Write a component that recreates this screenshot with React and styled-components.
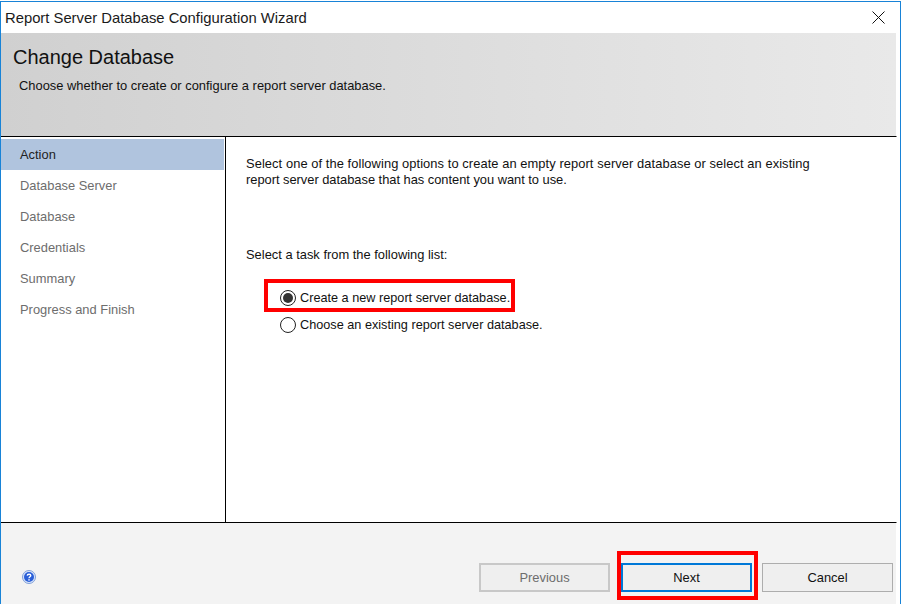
import styled, { createGlobalStyle } from 'styled-components';

const GlobalStyle = createGlobalStyle`
  html, body {
    margin: 0;
    padding: 0;
    background: #fff;
  }
  body {
    font-family: "Liberation Sans", Arial, sans-serif;
    color: #111;
  }
`;

const Window = styled.div`
  box-sizing: border-box;
  width: 901px;
  height: 603px;
  margin-top: 1px;
  border-top: 1px solid #1883d7;
  border-left: 1px solid #1883d7;
  border-right: 1px solid #1883d7;
  display: flex;
  flex-direction: column;
  background: #fff;
  overflow: hidden;
`;

const TitleBar = styled.div`
  height: 31px;
  flex: none;
  display: flex;
  align-items: center;
  justify-content: space-between;
  padding: 0 15px 0 4px;
  font-size: 14.8px;
  color: #1a1a1a;
`;

const CloseButton = styled.svg`
  width: 13px;
  height: 13px;
  display: block;
`;

const Header = styled.div`
  box-sizing: border-box;
  height: 104px;
  flex: none;
  margin-right: 3px;
  border-bottom: 1px solid #000;
  border-right: 1px solid #fff;
  background: linear-gradient(to right, #d0d0d0, #e9e9e9);
  background-clip: padding-box;
  padding: 12px 12px 0;
`;

const HeaderTitle = styled.h1`
  margin: 0;
  font-size: 20px;
  font-weight: 400;
  line-height: 24px;
  color: #111;
`;

const HeaderText = styled.p`
  margin: 9px 0 0 6px;
  font-size: 12.9px;
  line-height: 16px;
`;

const Body = styled.div`
  flex: 1;
  display: flex;
  min-height: 0;
`;

const Sidebar = styled.nav`
  box-sizing: border-box;
  width: 225px;
  flex: none;
  border-right: 1px solid #000;
  padding-top: 2px;
`;

const Step = styled.div`
  box-sizing: border-box;
  width: 223px;
  height: 31px;
  padding-left: 19px;
  display: flex;
  align-items: center;
  font-size: 12.9px;
  color: ${({ $active }) => ($active ? '#222' : '#6d6d6d')};
  background: ${({ $active }) => ($active ? '#b0c4de' : 'transparent')};
`;

const Content = styled.main`
  flex: 1;
  padding: 19px 0 0 20px;
  font-size: 12.9px;
  line-height: 16px;
`;

const Intro = styled.p`
  margin: 0;
`;

const IntroLine = styled.span`
  display: block;
  letter-spacing: ${({ $spacing }) => $spacing};
`;

const TaskLabel = styled.p`
  margin: 59px 0 0;
`;

const Options = styled.div`
  margin: 26px 0 0 34px;
  display: flex;
  flex-direction: column;
  gap: 10px;
  align-items: flex-start;
  font-size: 12.7px;
`;

const Option = styled.label`
  position: relative;
  display: flex;
  align-items: center;
  gap: 4px;
  height: 17px;
`;

const Radio = styled.span`
  box-sizing: border-box;
  width: 16px;
  height: 16px;
  border-radius: 50%;
  border: 1px solid #222;
  background: #fff;
  display: flex;
  align-items: center;
  justify-content: center;
  &::after {
    content: '';
    display: ${({ $checked }) => ($checked ? 'block' : 'none')};
    width: 10px;
    height: 10px;
    border-radius: 50%;
    background: #333;
  }
`;

const RedMark = styled.span`
  position: absolute;
  box-sizing: border-box;
  inset: ${({ $inset }) => $inset};
  border: 4px solid #f00;
  pointer-events: none;
`;

const Footer = styled.footer`
  box-sizing: border-box;
  height: 82px;
  flex: none;
  margin-right: 3px;
  border-top: 1px solid #000;
  border-right: 1px solid #fff;
  background: #f3f3f3;
  background-clip: padding-box;
  padding: 0 3px 0 21px;
  display: flex;
  align-items: flex-end;
  justify-content: space-between;
`;

const HelpIcon = styled.svg`
  width: 14px;
  height: 14px;
  display: block;
  margin-bottom: 20px;
`;

const Buttons = styled.div`
  display: flex;
  margin-bottom: 12px;
`;

const ButtonWrap = styled.div`
  position: relative;
  margin: 0 10px 0 11px;
`;

const Button = styled.button`
  box-sizing: border-box;
  display: block;
  width: 131px;
  height: 29px;
  padding: 0;
  font: 12.9px "Liberation Sans", Arial, sans-serif;
  color: ${({ disabled }) => (disabled ? '#6d6d6d' : '#111')};
  background: #efefef;
  border: ${({ $variant }) =>
    $variant === 'default' ? '2px solid #0078d7' : $variant === 'off' ? '2px solid #c8c8c8' : '1px solid #adadad'};
`;

const steps = ['Action', 'Database Server', 'Database', 'Credentials', 'Summary', 'Progress and Finish'];

export default function App() {
  return (
    <>
      <GlobalStyle />
      <Window>
        <TitleBar>
          <span>Report Server Database Configuration Wizard</span>
          <CloseButton viewBox="0 0 13 13">
            <path d="M0.5 0.5L12.5 12.5M12.5 0.5L0.5 12.5" stroke="#111" strokeWidth="1" fill="none" />
          </CloseButton>
        </TitleBar>
        <Header>
          <HeaderTitle>Change Database</HeaderTitle>
          <HeaderText>Choose whether to create or configure a report server database.</HeaderText>
        </Header>
        <Body>
          <Sidebar>
            {steps.map((step, i) => (
              <Step key={step} $active={i === 0}>{step}</Step>
            ))}
          </Sidebar>
          <Content>
            <Intro>
              <IntroLine $spacing="0.07px">
                Select one of the following options to create an empty report server database or select an existing
              </IntroLine>
              <IntroLine $spacing="-0.03px">report server database that has content you want to use.</IntroLine>
            </Intro>
            <TaskLabel>Select a task from the following list:</TaskLabel>
            <Options>
              <Option>
                <Radio $checked />
                Create a new report server database.
                <RedMark $inset="-10px -5px -6px -16px" />
              </Option>
              <Option>
                <Radio />
                Choose an existing report server database.
              </Option>
            </Options>
          </Content>
        </Body>
        <Footer>
          <HelpIcon viewBox="0 0 14 14">
            <circle cx="7" cy="7" r="6.5" fill="#dbe6fb" stroke="#7f9fd8" strokeWidth="1" />
            <circle cx="7" cy="7" r="5" fill="#2a5fd8" />
            <path d="M5.2 5.6C5.3 3.8 8.8 3.8 8.8 5.6C8.8 6.9 7 6.8 7 8.3" stroke="#fff" strokeWidth="1.3" fill="none" />
            <rect x="6.3" y="9.2" width="1.4" height="1.4" fill="#fff" />
          </HelpIcon>
          <Buttons>
            <Button disabled $variant="off">Previous</Button>
            <ButtonWrap>
              <Button $variant="default">Next</Button>
              <RedMark $inset="-12px -6px -8px -4px" />
            </ButtonWrap>
            <Button>Cancel</Button>
          </Buttons>
        </Footer>
      </Window>
    </>
  );
}
